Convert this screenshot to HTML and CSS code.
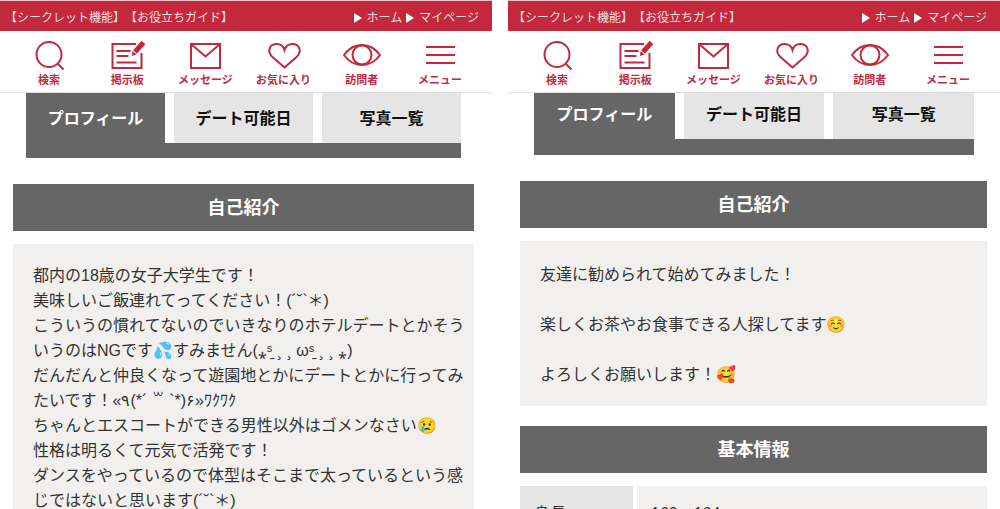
FILE: index.html
```
<!DOCTYPE html>
<html lang="ja">
<head>
  <meta charset="UTF-8">
  <meta name="viewport" content="width=device-width, initial-scale=1.0">
  <title>プロフィール</title>
  <link rel="stylesheet" href="styles.css">
</head>
<body>
  <svg class="defs" width="0" height="0" aria-hidden="true">
    <symbol id="icon-search" viewBox="0 0 40 32">
      <circle cx="20" cy="14.500" r="12.500"/>
      <path d="M28.500 23.500l6 6"/>
    </symbol>
    <symbol id="icon-board" viewBox="0 0 40 32">
      <path d="M29 4H5.500v24h29V13M9.500 11h14M9.500 16h12M9.500 22.500h20"/>
      <path class="pencil" d="M36.500 2.500L28 12"/>
      <path class="solid" d="M25.500 11l4 3.500-4.500 1.500z"/>
    </symbol>
    <symbol id="icon-mail" viewBox="0 0 40 32">
      <path d="M6 4h29v24H6zM6 4l14.500 12.500L35 4"/>
    </symbol>
    <symbol id="icon-heart" viewBox="0 0 40 32">
      <path d="M20.500 27.500L9 17.500C2 11 6 4 12.500 4c4 0 7 2.500 8 6 1-3.500 4-6 8-6C35 4 39 11 32 17.500z"/>
    </symbol>
    <symbol id="icon-eye" viewBox="0 0 40 32">
      <path d="M2 15C7 8 13 5 20 5s13 3 18 10C33 22 27 25 20 25S7 22 2 15z"/>
      <circle cx="20" cy="15" r="9.500"/>
    </symbol>
    <symbol id="icon-menu" viewBox="0 0 40 32">
      <path d="M6 7h29M6 15h29M6 23h29"/>
    </symbol>
  </svg>

  <div class="screens">
    <div class="screen">
      <header class="topbar">
        <div class="guide"><a href="#">【シークレット機能】</a><a href="#">【お役立ちガイド】</a></div>
        <div class="crumbs"><a href="#">ホーム</a><a href="#">マイページ</a></div>
      </header>
      <nav class="menu">
        <a href="#"><svg><use href="#icon-search"/></svg>検索</a>
        <a href="#"><svg><use href="#icon-board"/></svg>掲示板</a>
        <a href="#"><svg><use href="#icon-mail"/></svg>メッセージ</a>
        <a href="#"><svg><use href="#icon-heart"/></svg>お気に入り</a>
        <a href="#"><svg><use href="#icon-eye"/></svg>訪問者</a>
        <a href="#"><svg><use href="#icon-menu"/></svg>メニュー</a>
      </nav>
      <div class="tabs">
        <button class="tab active">プロフィール</button>
        <button class="tab">デート可能日</button>
        <button class="tab">写真一覧</button>
      </div>
      <main class="content">
        <h2>自己紹介</h2>
        <p class="intro">都内の18歳の女子大学生です！<br>
          美味しいご飯連れてってください！(´˘`＊)<br>
          こういうの慣れてないのでいきなりのホテルデートとかそういうのはNGです💦すみません(⁎ˢ̱ ¸ ¸ ωˢ̱ ¸ ¸ ⁎)<br>
          だんだんと仲良くなって遊園地とかにデートとかに行ってみたいです！<bdo dir="ltr">«٩(*´ ꒳ `*)۶»</bdo>ﾜｸﾜｸ<br>
          ちゃんとエスコートができる男性以外はゴメンなさい😢<br>
          性格は明るくて元気で活発です！<br>
          ダンスをやっているので体型はそこまで太っているという感じではないと思います(´˘`＊)</p>
      </main>
    </div>

    <div class="screen scrolled">
      <header class="topbar">
        <div class="guide"><a href="#">【シークレット機能】</a><a href="#">【お役立ちガイド】</a></div>
        <div class="crumbs"><a href="#">ホーム</a><a href="#">マイページ</a></div>
      </header>
      <nav class="menu">
        <a href="#"><svg><use href="#icon-search"/></svg>検索</a>
        <a href="#"><svg><use href="#icon-board"/></svg>掲示板</a>
        <a href="#"><svg><use href="#icon-mail"/></svg>メッセージ</a>
        <a href="#"><svg><use href="#icon-heart"/></svg>お気に入り</a>
        <a href="#"><svg><use href="#icon-eye"/></svg>訪問者</a>
        <a href="#"><svg><use href="#icon-menu"/></svg>メニュー</a>
      </nav>
      <div class="tabs">
        <button class="tab active">プロフィール</button>
        <button class="tab">デート可能日</button>
        <button class="tab">写真一覧</button>
      </div>
      <main class="content">
        <h2>自己紹介</h2>
        <p class="intro">友達に勧められて始めてみました！<br><br>
          楽しくお茶やお食事できる人探してます☺️<br><br>
          よろしくお願いします！🥰</p>
        <h2>基本情報</h2>
        <table class="info">
          <tr><th scope="row">身長</th><td>160～164cm</td></tr>
        </table>
      </main>
    </div>
  </div>
</body>
</html>
```
FILE: styles.css
```
* {
  box-sizing: border-box;
}

body {
  margin: 0;
  height: 100vh;
  overflow: hidden;
  background: #fff;
  color: #333;
  font-family: "Liberation Sans", "Noto Sans CJK JP", sans-serif;
  font-size: 16px;
  line-height: 25px;
  text-spacing-trim: space-all;
}

a {
  color: inherit;
  text-decoration: none;
}

.defs {
  position: absolute;
}

.screens {
  display: grid;
  grid-template-columns: 1fr 1fr;
  gap: 16px;
}

.screen {
  min-width: 0;
}

.topbar {
  display: flex;
  justify-content: space-between;
  align-items: center;
  height: 31px;
  padding: 4px 13px 0 5px;
  border-top: 1px solid #f0c4ca;
  background: #c3283c;
  color: #fbdfe2;
  font-size: 12px;
  white-space: nowrap;
}

.guide,
.crumbs {
  display: flex;
}

.crumbs {
  gap: 4px;
}

.crumbs a {
  display: flex;
  align-items: center;
  gap: 5px;
}

.crumbs a::before {
  content: "";
  border-left: 8px solid #fff;
  border-top: 5px solid transparent;
  border-bottom: 5px solid transparent;
}

.menu {
  display: grid;
  grid-template-columns: repeat(6, 1fr);
  height: 62px;
  padding: 9px 13px 0 10px;
  border-bottom: 1px solid #ddd;
  color: #c3283c;
  font-size: 11px;
  font-weight: bold;
  line-height: 16px;
}

.menu a {
  display: flex;
  flex-direction: column;
  align-items: center;
  white-space: nowrap;
}

.menu svg {
  width: 40px;
  height: 32px;
  fill: none;
  stroke: #c3283c;
  stroke-width: 2;
}

.pencil {
  stroke-width: 5;
}

.solid {
  fill: #c3283c;
  stroke: none;
}

.tabs {
  display: grid;
  grid-template-columns: repeat(3, 1fr);
  gap: 9px;
  margin: 0 31px 0 26px;
  border-bottom: 15px solid #666;
}

.tab {
  height: 50px;
  padding: 0;
  border: 0;
  background: #e5e5e5;
  color: #111;
  font: inherit;
  font-weight: bold;
}

.tab.active {
  background: #666;
  color: #fff;
}

.content {
  padding: 26px 18px 0 13px;
}

h2 {
  margin: 0 0 13px;
  padding: 12px 0 10px;
  background: #666;
  color: #fff;
  font-size: 18px;
  line-height: 25px;
  text-align: center;
}

.intro {
  margin: 0 0 20px;
  padding: 19px 8px 20px 20px;
  background: #f1f0ef;
}

.info {
  width: 100%;
  border-collapse: separate;
  border-spacing: 0;
}

.info th,
.info td {
  padding: 15px 14px;
  text-align: left;
}

.info th {
  width: 117px;
  border-right: 4px solid #fff;
  background: #e5e5e5;
  font-weight: normal;
}

.info td {
  background: #f1f0ef;
}

.scrolled .tabs {
  margin: 0 26px;
  border-bottom-width: 16px;
}

.scrolled .tab {
  height: 46px;
  padding-bottom: 4px;
}

.scrolled .content {
  padding: 26px 13px 0 12px;
}

.scrolled .intro {
  padding: 21px 20px 19px;
}
```
